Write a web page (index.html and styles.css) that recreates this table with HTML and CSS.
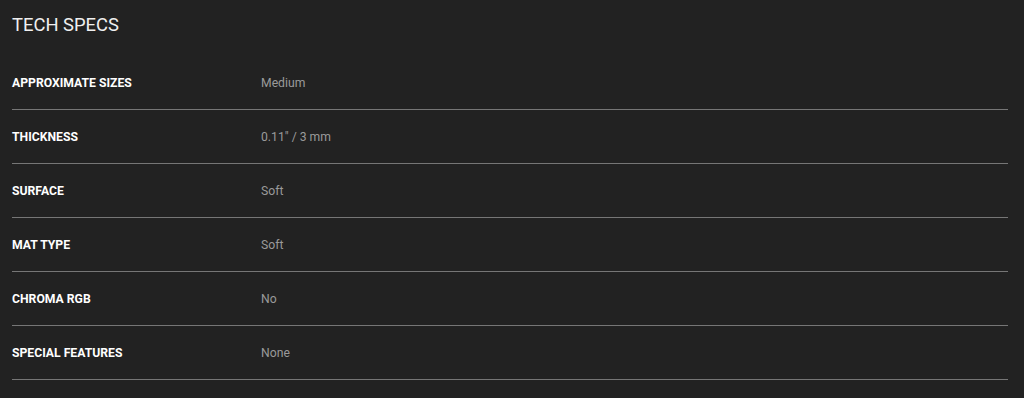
FILE: index.html
```html
<!DOCTYPE html>
<html>
<head>
<meta charset="utf-8">
<link rel="stylesheet" href="styles.css">
</head>
<body>
<section class="specs">
  <h2 class="specs-title">TECH SPECS</h2>
  <div class="spec-list">
    <div class="spec-row"><div class="spec-label">APPROXIMATE SIZES</div><div class="spec-value">Medium</div></div>
    <div class="spec-row"><div class="spec-label">THICKNESS</div><div class="spec-value">0.11" / 3 mm</div></div>
    <div class="spec-row"><div class="spec-label">SURFACE</div><div class="spec-value">Soft</div></div>
    <div class="spec-row"><div class="spec-label">MAT TYPE</div><div class="spec-value">Soft</div></div>
    <div class="spec-row"><div class="spec-label">CHROMA RGB</div><div class="spec-value">No</div></div>
    <div class="spec-row"><div class="spec-label">SPECIAL FEATURES</div><div class="spec-value">None</div></div>
  </div>
</section>
</body>
</html>
```
FILE: styles.css
```css
html, body {
  margin: 0;
  padding: 0;
  background: #222222;
}
body {
  font-family: Roboto, "Liberation Sans", sans-serif;
  height: 398px;
  overflow: hidden;
}
.specs {
  padding: 0 16px 0 12px;
}
.specs-title {
  margin: 0;
  height: 56px;
  padding-top: 14px;
  box-sizing: border-box;
  font-size: 18.4px;
  font-weight: 400;
  line-height: 22px;
  color: #f0f0f0;
}
.spec-row {
  display: grid;
  grid-template-columns: 25% 1fr;
  align-items: center;
  height: 54px;
  box-sizing: border-box;
  border-bottom: 1px solid #767676;
}
.spec-label {
  font-size: 12.2px;
  font-weight: 700;
  color: #ffffff;
}
.spec-value {
  font-size: 12.2px;
  color: #9a9a9a;
}
```
